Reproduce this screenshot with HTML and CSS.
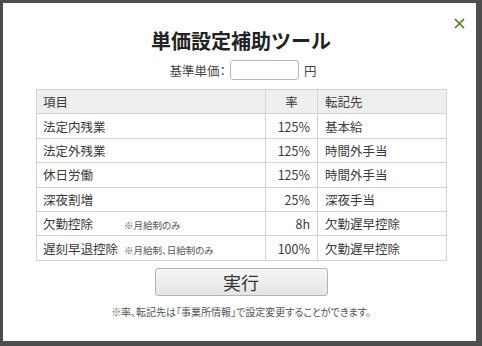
FILE: index.html
```html
<!DOCTYPE html>
<html lang="ja">

<head>
    <meta charset="UTF-8" />
    <meta name="viewport" content="width=device-width, initial-scale=1.0" />
    <title>単価設定補助ツール</title>
    <link rel="stylesheet" href="styles.css">
</head>

<body>
    <div class="modal">
        <!-- 閉じるボタン -->
        <a href="javascript:;" class="close">
            <svg width="11" height="11" viewBox="0 0 11 11">
                <path d="M1 1 L10 10 M10 1 L1 10" stroke="#4a7d1c" stroke-width="1.6" fill="none" />
            </svg>
        </a>
        <h1 class="title">単価設定補助ツール</h1>
        <div class="base">
            <span class="base-label">基準単価：</span>
            <input type="text" class="base-input">
            <span>円</span>
        </div>
        <table class="rate-table">
            <thead>
                <tr>
                    <th class="col-name">項目</th>
                    <th class="col-rate">率</th>
                    <th class="col-dest">転記先</th>
                </tr>
            </thead>
            <tbody>
                <tr>
                    <td>法定内残業</td>
                    <td class="num">125%</td>
                    <td>基本給</td>
                </tr>
                <tr>
                    <td>法定外残業</td>
                    <td class="num">125%</td>
                    <td>時間外手当</td>
                </tr>
                <tr>
                    <td>休日労働</td>
                    <td class="num">125%</td>
                    <td>時間外手当</td>
                </tr>
                <tr>
                    <td>深夜割増</td>
                    <td class="num">25%</td>
                    <td>深夜手当</td>
                </tr>
                <tr>
                    <td><span class="label">欠勤控除</span><span class="note">※月給制のみ</span></td>
                    <td class="num">8h</td>
                    <td>欠勤遅早控除</td>
                </tr>
                <tr>
                    <td><span class="label">遅刻早退控除</span><span class="note">※月給制、日給制のみ</span></td>
                    <td class="num">100%</td>
                    <td>欠勤遅早控除</td>
                </tr>
            </tbody>
        </table>
        <div class="actions">
            <button class="run">実行</button>
        </div>
        <p class="footnote">※率、転記先は「事業所情報」で設定変更することができます。</p>
    </div>
</body>

</html>
```

FILE: styles.css
```css
* {
    margin: 0;
    padding: 0;
    box-sizing: border-box;
}

body {
    background-color: #4e4e4e;
    font-family: "Noto Sans CJK JP", "Liberation Sans", sans-serif;
    color: #333;
}

.modal {
    position: relative;
    width: 473px;
    height: 338px;
    margin: 3px 0 0 3px;
    padding: 0 30px 0 33px;
    background-color: #fff;
}

.close {
    position: absolute;
    top: 15px;
    right: 11px;
    display: block;
    width: 11px;
    height: 11px;
    line-height: 0;
}

.title {
    padding-top: 24px;
    height: 52px;
    text-align: center;
    font-size: 20px;
    font-weight: bold;
    line-height: 28px;
    color: #222;
}

.base {
    display: flex;
    justify-content: center;
    align-items: center;
    gap: 3px;
    height: 30px;
    padding-left: 4px;
    font-size: 12.5px;
    color: #444;
}

.base-label {
    font-feature-settings: "palt";
    margin-right: 1px;
}

.base-input {
    width: 69px;
    height: 20px;
    border: 1px solid #b5b5b5;
    border-radius: 3px;
    margin-right: 2px;
}

.rate-table {
    width: 411px;
    margin-top: 4px;
    border-collapse: collapse;
    font-size: 12.5px;
    color: #3a3a3a;
}

.rate-table th,
.rate-table td {
    height: 24.4px;
    border: 1px solid #d2d2d2;
    padding: 0 6px;
    font-weight: normal;
    text-align: left;
    white-space: nowrap;
}

.rate-table th {
    background-color: #efefef;
}

.rate-table .col-name {
    width: 229px;
}

.rate-table .col-rate {
    width: 52px;
    text-align: center;
}

.rate-table .col-dest {
    padding-left: 7px;
}

.rate-table td:last-child {
    padding-left: 7px;
}

.rate-table .num {
    text-align: right;
    padding-right: 7px;
}

.label {
    display: inline-block;
    width: 81px;
}

.note {
    font-size: 9.5px;
    color: #555;
    font-feature-settings: "palt";
}

.actions {
    display: flex;
    justify-content: center;
    padding-top: 7px;
}

.run {
    width: 173px;
    height: 28px;
    border: 1px solid #b3b3b3;
    border-radius: 3px;
    background: linear-gradient(#f6f6f6, #e4e4e4);
    font-family: inherit;
    font-size: 18px;
    line-height: 26px;
    color: #333;
}

.footnote {
    margin-top: 8px;
    text-align: center;
    font-size: 10px;
    color: #555;
    font-feature-settings: "palt";
}
```
